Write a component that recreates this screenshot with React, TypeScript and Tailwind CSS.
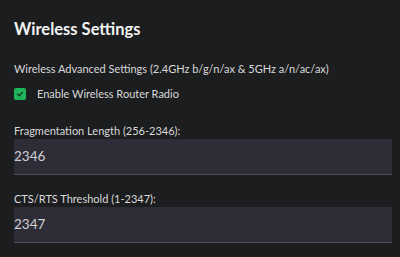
import React from "react";

function Field({ label, value }: { label: string; value: string }) {
  return (
    <div className="flex flex-col">
      <label className="text-[11px] leading-[14px] text-[#d9d9d9] mb-[1px]">{label}</label>
      <div className="h-[36px] w-[378px] bg-[#2d2c37] border-b border-[#4c4c52] flex items-center text-[13.5px] text-[#cfcfd2]">
        {value}
      </div>
    </div>
  );
}

export default function App() {
  return (
    <div
      className="w-[400px] h-[257px] bg-[#1c1d1f] px-[14px] pt-[19px] overflow-hidden"
      style={{ fontFamily: "Lato, 'Noto Sans', sans-serif" }}
    >
      <h1 className="text-[16.5px] leading-[20px] font-bold text-[#f2f2f2]">Wireless Settings</h1>
      <p className="mt-[23px] text-[11px] leading-[14px] text-[#d9d9d9]">
        Wireless Advanced Settings (2.4GHz b/g/n/ax &amp; 5GHz a/n/ac/ax)
      </p>
      <div className="mt-[11px] h-[14px] flex items-center gap-[11px]">
        <span className="w-[12px] h-[12px] rounded-[2px] bg-[#1db45e] flex items-center justify-center">
          <svg width="8" height="8" viewBox="0 0 8 8" fill="none">
            <path d="M1.5 4.2 L3.2 5.8 L6.5 2.3" stroke="#14391f" strokeWidth="1.3" strokeLinecap="round" strokeLinejoin="round" />
          </svg>
        </span>
        <span className="text-[11px] leading-[14px] text-[#d9d9d9]">Enable Wireless Router Radio</span>
      </div>
      <div className="mt-[23px] flex flex-col gap-[17px]">
        <Field label="Fragmentation Length (256-2346):" value="2346" />
        <Field label="CTS/RTS Threshold (1-2347):" value="2347" />
      </div>
    </div>
  );
}
